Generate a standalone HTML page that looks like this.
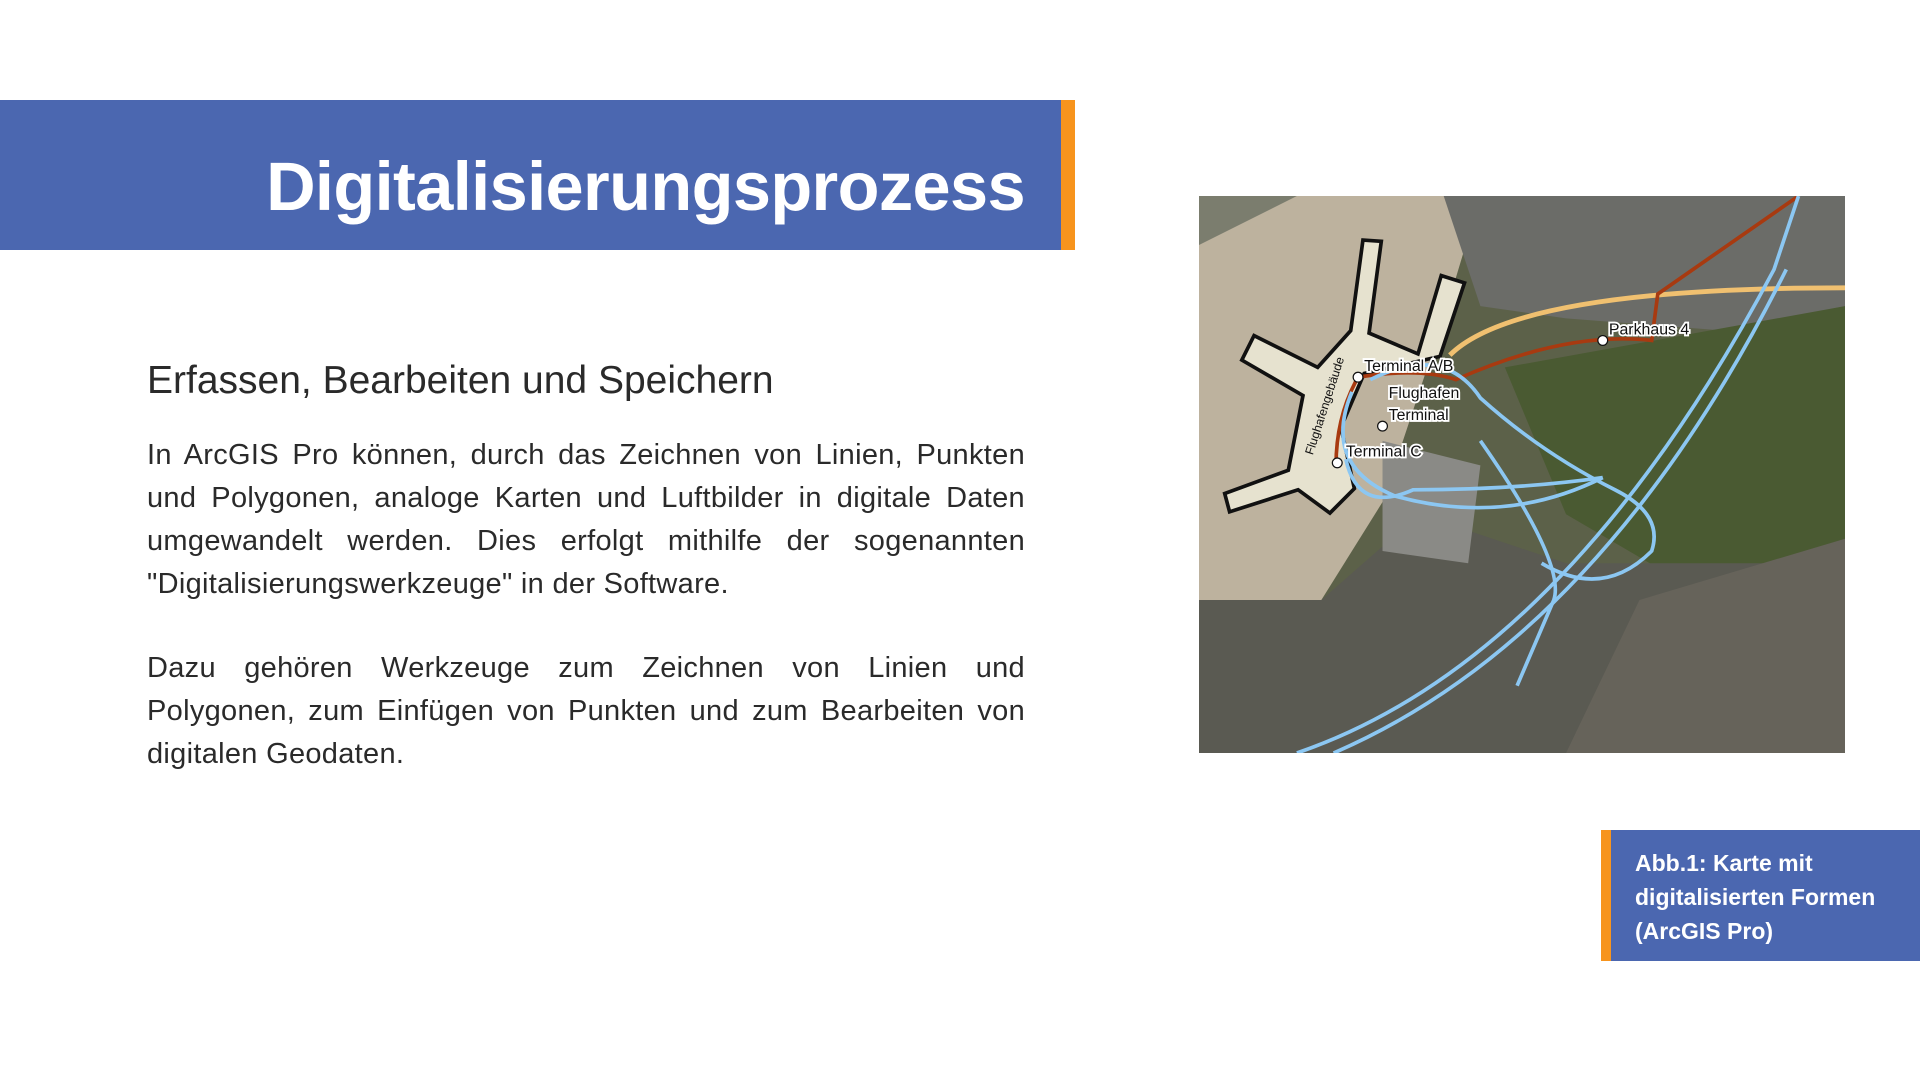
<!DOCTYPE html>
<html><head><meta charset="utf-8"><style>
html,body{margin:0;padding:0;width:1920px;height:1080px;background:#fff;overflow:hidden;font-family:"Liberation Sans",sans-serif}
.bar{position:absolute;left:0;top:100px;width:1061px;height:150px;background:#4b67b0}
.bar .or{position:absolute;right:-14px;top:0;width:14px;height:150px;background:#f7941d}
.bar h1{position:absolute;right:36px;top:12px;margin:0;line-height:150px;color:#fff;font-size:68.5px;font-weight:bold;letter-spacing:-0.6px}
.sub{position:absolute;left:147px;top:359px;font-size:39px;color:#2a2a2a;font-weight:normal}
.p{position:absolute;left:147px;width:878px;font-size:29px;letter-spacing:0.3px;line-height:43px;color:#2a2a2a;text-align:justify}
.cap{position:absolute;left:1601px;top:830px;width:319px;height:131px;background:#4b67b0}
.cap .or{position:absolute;left:0;top:0;width:10px;height:131px;background:#f7941d}
.cap div.t{position:absolute;left:34px;top:16px;color:#fff;font-weight:bold;font-size:23px;line-height:34px}
.map{position:absolute;left:1199px;top:196px;width:646px;height:557px}
</style></head><body>
<div class="bar"><div class="or"></div><h1>Digitalisierungsprozess</h1></div>
<div class="sub">Erfassen, Bearbeiten und Speichern</div>
<div class="p" style="top:434px">In ArcGIS Pro können, durch das Zeichnen von Linien, Punkten und Polygonen, analoge Karten und Luftbilder in digitale Daten umgewandelt werden. Dies erfolgt mithilfe der sogenannten "Digitalisierungswerkzeuge" in der Software.</div>
<div class="p" style="top:647px">Dazu gehören Werkzeuge zum Zeichnen von Linien und Polygonen, zum Einfügen von Punkten und zum Bearbeiten von digitalen Geodaten.</div>
<svg class="map" viewBox="0 0 528 455" preserveAspectRatio="none">
<rect width="528" height="455" fill="#5c6149"/>
<path d="M0 0H230L200 100L150 250L100 330L0 330Z" fill="#bdb29e"/>
<path d="M0 0H80L0 40Z" fill="#7b7d6e"/>
<path d="M200 0H528V90L430 110L300 100L230 90Z" fill="#6b6c68"/>
<path d="M250 140L528 90V300L420 330L300 260Z" fill="#4a5a32"/>
<path d="M0 330L100 330L180 260L300 300L528 300V455H0Z" fill="#5a5a52"/>
<path d="M360 330L528 280V455H300Z" fill="#66635a"/>
<path d="M150 200L230 220L220 300L150 290Z" fill="#8a8a86"/>
<path d="M134 36L149 37L139 112L179 129L198 65L217 71L197 131L135 145L116 189L127 239L107 259L81 240L25 258L21 243L73 224L85 163L35 134L45 114L97 140L124 110Z" fill="#e6e2cf" stroke="#111" stroke-width="3"/>
<path d="M205 130Q260 75 528 75" stroke="#f0c070" stroke-width="4" fill="none"/>
<path d="M130 148Q112 180 112 220M130 148Q180 140 210 150Q300 110 370 118L375 80L490 0" stroke="#a83a10" stroke-width="3" fill="none"/>
<g stroke="#8cc7f2" stroke-width="3" fill="none">
<path d="M80 455Q300 380 470 60L490 0"/>
<path d="M110 455Q330 360 480 60"/>
<path d="M120 215Q130 260 175 240Q260 240 330 230"/>
<path d="M125 160Q100 220 160 245Q250 270 330 230"/>
<path d="M140 150Q200 120 230 165Q280 210 340 240Q380 260 370 290Q330 330 280 300"/>
<path d="M230 200Q300 300 290 330L260 400"/>
</g>
<text x="93" y="212" transform="rotate(-72 93 212)" font-size="10" fill="#111">Flughafengebäude</text>
<g font-size="13" fill="#111" stroke="#fff" stroke-width="3" paint-order="stroke">
<text x="135" y="143">Terminal A/B</text><text x="155" y="165">Flughafen</text><text x="155" y="183">Terminal</text><text x="120" y="213">Terminal C</text><text x="335" y="113">Parkhaus 4</text></g>
<g fill="#fff" stroke="#111"><circle cx="130" cy="148" r="4"/><circle cx="150" cy="188" r="4"/><circle cx="113" cy="218" r="4"/><circle cx="330" cy="118" r="4"/></g>
</svg>
<div class="cap"><div class="or"></div><div class="t">Abb.1: Karte mit<br>digitalisierten Formen<br>(ArcGIS Pro)</div></div>
</body></html>
